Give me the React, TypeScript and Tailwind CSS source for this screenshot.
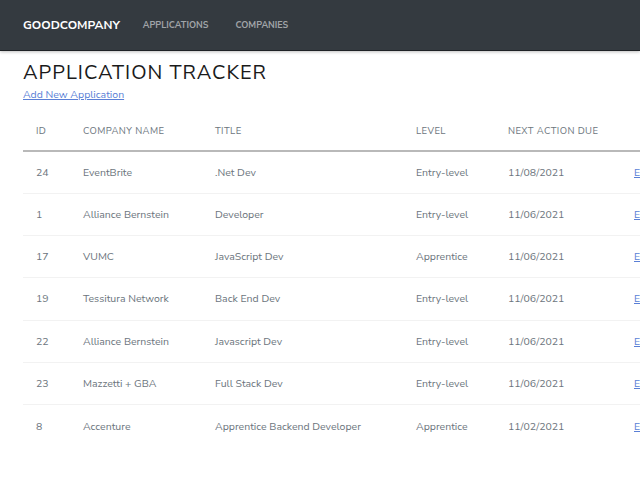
import React from "react";

interface Application {
  id: number;
  company: string;
  title: string;
  level: string;
  due: string;
}

const APPLICATIONS: Application[] = [
  { id: 24, company: "EventBrite", title: ".Net Dev", level: "Entry-level", due: "11/08/2021" },
  { id: 1, company: "Alliance Bernstein", title: "Developer", level: "Entry-level", due: "11/06/2021" },
  { id: 17, company: "VUMC", title: "JavaScript Dev", level: "Apprentice", due: "11/06/2021" },
  { id: 19, company: "Tessitura Network", title: "Back End Dev", level: "Entry-level", due: "11/06/2021" },
  { id: 22, company: "Alliance Bernstein", title: "Javascript Dev", level: "Entry-level", due: "11/06/2021" },
  { id: 23, company: "Mazzetti + GBA", title: "Full Stack Dev", level: "Entry-level", due: "11/06/2021" },
  { id: 8, company: "Accenture", title: "Apprentice Backend Developer", level: "Apprentice", due: "11/02/2021" },
];

export default function App() {
  return (
    <div
      className="min-h-[481px] w-[640px] overflow-hidden bg-white"
      style={{ fontFamily: "'Nunito Sans', Lato, 'Open Sans', sans-serif" }}
    >
      {/* ── Navbar ── */}
      <nav className="flex h-[51px] items-center border-b border-[#1f2226] bg-[#343a40] px-[23px] shadow-[0_1px_3px_rgba(0,0,0,0.25)]">
        <span className="mr-[23px] text-[12px] font-bold text-white">
          GOODCOMPANY
        </span>
        <a className="mr-[27px] mt-[2px] text-[9px] font-bold text-[#a0a4a8]">
          APPLICATIONS
        </a>
        <a className="mt-[2px] text-[9px] font-bold text-[#a0a4a8]">COMPANIES</a>
      </nav>

      {/* ── Content ── */}
      <div className="pl-[23px]">
        <h1 className="mt-[10px] text-[20px] leading-[24px] font-normal tracking-[1px] text-[#1a1a1a]">
          APPLICATION TRACKER
        </h1>
        <a className="mt-[3px] block text-[10.5px] leading-[14px] text-[#5a7fd6] underline">
          Add New Application
        </a>

        <table className="mt-[11px] w-[700px] table-fixed border-collapse text-[10.5px] text-[#6c757d]">
          <thead>
            <tr className="h-[38px] border-b-2 border-[#b9b9b9]">
              <th className="w-[47px] pl-[13px] text-left font-normal text-[9.5px] tracking-[0.4px]">ID</th>
              <th className="w-[132px] pl-[13px] text-left font-normal text-[9.5px] tracking-[0.4px]">COMPANY NAME</th>
              <th className="w-[201px] pl-[13px] text-left font-normal text-[9.5px] tracking-[0.4px]">TITLE</th>
              <th className="w-[92px] pl-[13px] text-left font-normal text-[9.5px] tracking-[0.4px]">LEVEL</th>
              <th className="w-[126px] pl-[13px] text-left font-normal text-[9.5px] tracking-[0.4px]">NEXT ACTION DUE</th>
              <th className="pl-[13px]"></th>
            </tr>
          </thead>
          <tbody>
            {APPLICATIONS.map((app) => (
              <tr key={app.id} className="h-[42.34px] border-b border-[#f2f2f2] last:border-b-0">
                <td className="pl-[13px]">{app.id}</td>
                <td className="pl-[13px]">{app.company}</td>
                <td className="pl-[13px]">{app.title}</td>
                <td className="pl-[13px]">{app.level}</td>
                <td className="pl-[13px]">{app.due}</td>
                <td className="pl-[13px]">
                  <a className="text-[#5a7fd6] underline">Edit</a>
                </td>
              </tr>
            ))}
          </tbody>
        </table>
      </div>
    </div>
  );
}
